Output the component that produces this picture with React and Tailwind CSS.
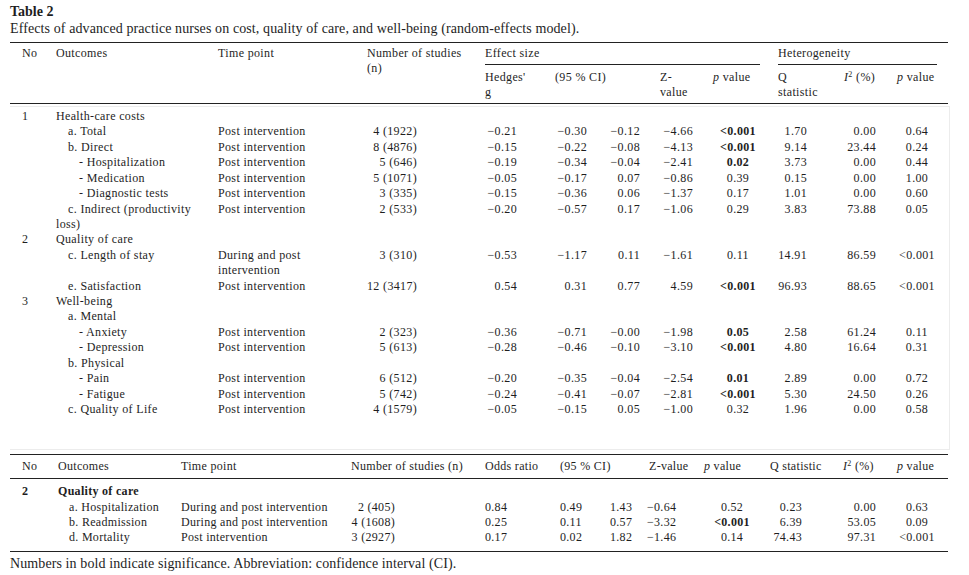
const GRID1 = 'grid grid-cols-[46px_162px_149px_118px_70px_55px_50px_53px_65px_66px_53px_51px] whitespace-nowrap';
const GRID2 = 'grid grid-cols-[48px_123px_170px_134px_75px_50px_39px_55px_66px_73px_54px_51px] whitespace-nowrap';

const PI = 'Post intervention';

const rows1 = [
    { no: '1', label: 'Health-care costs' },
    { label: 'a. Total', level: 1, time: PI, n: '4 (1922)', g: '−0.21', lo: '−0.30', hi: '−0.12', z: '−4.66', p: '<0.001', pb: true, q: '1.70', i2: '0.00', hp: '0.64' },
    { label: 'b. Direct', level: 1, time: PI, n: '8 (4876)', g: '−0.15', lo: '−0.22', hi: '−0.08', z: '−4.13', p: '<0.001', pb: true, q: '9.14', i2: '23.44', hp: '0.24' },
    { label: '- Hospitalization', level: 2, time: PI, n: '5 (646)', g: '−0.19', lo: '−0.34', hi: '−0.04', z: '−2.41', p: '0.02', pb: true, q: '3.73', i2: '0.00', hp: '0.44' },
    { label: '- Medication', level: 2, time: PI, n: '5 (1071)', g: '−0.05', lo: '−0.17', hi: '0.07', z: '−0.86', p: '0.39', q: '0.15', i2: '0.00', hp: '1.00' },
    { label: '- Diagnostic tests', level: 2, time: PI, n: '3 (335)', g: '−0.15', lo: '−0.36', hi: '0.06', z: '−1.37', p: '0.17', q: '1.01', i2: '0.00', hp: '0.60' },
    { label: ['c. Indirect (productivity', 'loss)'], time: PI, n: '2 (533)', g: '−0.20', lo: '−0.57', hi: '0.17', z: '−1.06', p: '0.29', q: '3.83', i2: '73.88', hp: '0.05' },
    { no: '2', label: 'Quality of care' },
    { label: 'c. Length of stay', level: 1, time: ['During and post', 'intervention'], n: '3 (310)', g: '−0.53', lo: '−1.17', hi: '0.11', z: '−1.61', p: '0.11', q: '14.91', i2: '86.59', hp: '<0.001' },
    { label: 'e. Satisfaction', level: 1, time: PI, n: '12 (3417)', g: '0.54', lo: '0.31', hi: '0.77', z: '4.59', p: '<0.001', pb: true, q: '96.93', i2: '88.65', hp: '<0.001' },
    { no: '3', label: 'Well-being' },
    { label: 'a. Mental', level: 1 },
    { label: '- Anxiety', level: 2, time: PI, n: '2 (323)', g: '−0.36', lo: '−0.71', hi: '−0.00', z: '−1.98', p: '0.05', pb: true, q: '2.58', i2: '61.24', hp: '0.11' },
    { label: '- Depression', level: 2, time: PI, n: '5 (613)', g: '−0.28', lo: '−0.46', hi: '−0.10', z: '−3.10', p: '<0.001', pb: true, q: '4.80', i2: '16.64', hp: '0.31' },
    { label: 'b. Physical', level: 1 },
    { label: '- Pain', level: 2, time: PI, n: '6 (512)', g: '−0.20', lo: '−0.35', hi: '−0.04', z: '−2.54', p: '0.01', pb: true, q: '2.89', i2: '0.00', hp: '0.72' },
    { label: '- Fatigue', level: 2, time: PI, n: '5 (742)', g: '−0.24', lo: '−0.41', hi: '−0.07', z: '−2.81', p: '<0.001', pb: true, q: '5.30', i2: '24.50', hp: '0.26' },
    { label: 'c. Quality of Life', level: 1, time: PI, n: '4 (1579)', g: '−0.05', lo: '−0.15', hi: '0.05', z: '−1.00', p: '0.32', q: '1.96', i2: '0.00', hp: '0.58' },
];

const rows2 = [
    { label: 'a. Hospitalization', time: 'During and post intervention', n: '2 (405)', or: '0.84', lo: '0.49', hi: '1.43', z: '−0.64', p: '0.52', q: '0.23', i2: '0.00', hp: '0.63' },
    { label: 'b. Readmission', time: 'During and post intervention', n: '4 (1608)', or: '0.25', lo: '0.11', hi: '0.57', z: '−3.32', p: '<0.001', pb: true, q: '6.39', i2: '53.05', hp: '0.09' },
    { label: 'd. Mortality', time: PI, n: '3 (2927)', or: '0.17', lo: '0.02', hi: '1.82', z: '−1.46', p: '0.14', q: '74.43', i2: '97.31', hp: '<0.001' },
];

const Lines = ({ v }) =>
    Array.isArray(v) ? (
        <>
            {v[0]}
            <br />
            {v[1]}
        </>
    ) : (
        v
    );

const PVal = () => (
    <>
        <i>p</i> value
    </>
);

const I2 = () => (
    <>
        <i>I</i>
        <sup className="text-[8px]">2</sup> (%)
    </>
);

const Row1 = ({ r }) => {
    const indent = Array.isArray(r.label)
        ? 'indent-[12px]'
        : r.level === 2
        ? 'pl-[23px]'
        : r.level === 1
        ? 'pl-[12px]'
        : '';
    return (
        <div className={`${GRID1} leading-[15.42px]`}>
            <div className="pl-[12px]">{r.no}</div>
            <div className={indent}>
                <Lines v={r.label} />
            </div>
            <div>
                <Lines v={r.time} />
            </div>
            <div className="text-right pr-[68px]">{r.n}</div>
            <div className="text-right pr-[38px]">{r.g}</div>
            <div className="text-right pr-[23px]">{r.lo}</div>
            <div className="text-right pr-[20px]">{r.hi}</div>
            <div className="text-right pr-[20px]">{r.z}</div>
            <div className={`text-center pr-[15px] ${r.pb ? 'font-bold' : ''}`}>{r.p}</div>
            <div className="text-right pr-[37px]">{r.q}</div>
            <div className="text-right pr-[21px]">{r.i2}</div>
            <div className="text-center pr-[11px]">{r.hp}</div>
        </div>
    );
};

const Row2 = ({ r }) => (
    <div className={`${GRID2} leading-[15.3px]`}>
        <div />
        <div className="pl-[11px]">{r.label}</div>
        <div>{r.time}</div>
        <div className="text-right pr-[90px]">{r.n}</div>
        <div>{r.or}</div>
        <div>{r.lo}</div>
        <div className="text-right pr-[22px]">{r.hi}</div>
        <div className="-ml-[2px]">{r.z}</div>
        <div className={`text-center pr-[10px] ${r.pb ? 'font-bold' : ''}`}>{r.p}</div>
        <div className="text-right pr-[41px]">{r.q}</div>
        <div className="text-right pr-[21px]">{r.i2}</div>
        <div className="text-center pr-[11px]">{r.hp}</div>
    </div>
);

export default function App() {
    return (
        <div className="w-[969px] h-[575px] bg-white text-[#1e1e1e] font-['Liberation_Serif',serif] overflow-hidden">
            <div className="pl-[10px] pt-[4px]">
                <div className="text-[14px] font-bold leading-[16px]">Table 2</div>
                <div className="text-[14px] leading-[17px] tracking-[0.1px]">
                    Effects of advanced practice nurses on cost, quality of care, and well-being (random-effects model).
                </div>

                {/* Table 1 */}
                <div className="mt-[5px] w-[938px] border-t border-[#222] text-[12px] tracking-[0.35px]">
                    <div className="flex pt-[3px] leading-[15px] border-b border-[#222] pb-[3px] whitespace-nowrap">
                        <div className="w-[46px] pl-[12px]">No</div>
                        <div className="w-[162px]">Outcomes</div>
                        <div className="w-[149px]">Time point</div>
                        <div className="w-[118px]">
                            Number of studies
                            <br />
                            (n)
                        </div>
                        <div className="w-[293px]">
                            <div>Effect size</div>
                            <div className="w-[275px] border-b border-[#222] mt-[3px] mb-[5px]" />
                            <div className="grid grid-cols-[70px_105px_53px_65px]">
                                <div>
                                    Hedges'
                                    <br />g
                                </div>
                                <div>(95 % CI)</div>
                                <div>
                                    Z-
                                    <br />
                                    value
                                </div>
                                <div>
                                    <PVal />
                                </div>
                            </div>
                        </div>
                        <div className="w-[170px]">
                            <div>Heterogeneity</div>
                            <div className="w-[159px] border-b border-[#222] mt-[3px] mb-[5px]" />
                            <div className="grid grid-cols-[66px_53px_51px]">
                                <div>
                                    Q
                                    <br />
                                    statistic
                                </div>
                                <div>
                                    <I2 />
                                </div>
                                <div>
                                    <PVal />
                                </div>
                            </div>
                        </div>
                    </div>
                    <div className="mt-[2px] w-[940px] border-t border-r border-b border-[#ececec] pt-[2px] pb-[32px]">
                        {rows1.map((r, i) => (
                            <Row1 key={i} r={r} />
                        ))}
                    </div>
                </div>

                {/* Table 2 */}
                <div className="mt-[4px] w-[938px] border-t border-b border-[#222] text-[12px] tracking-[0.3px]">
                    <div className={`${GRID2} leading-[15px] pt-[4px] pb-[4px] border-b border-[#222]`}>
                        <div className="pl-[12px]">No</div>
                        <div>Outcomes</div>
                        <div>Time point</div>
                        <div>Number of studies (n)</div>
                        <div>Odds ratio</div>
                        <div className="col-span-2">(95 % CI)</div>
                        <div>Z-value</div>
                        <div>
                            <PVal />
                        </div>
                        <div>Q statistic</div>
                        <div>
                            <I2 />
                        </div>
                        <div>
                            <PVal />
                        </div>
                    </div>
                    <div className="pt-[5px] pb-[5px]">
                        <div className={`${GRID2} leading-[15.3px]`}>
                            <div className="pl-[12px] font-bold">2</div>
                            <div className="font-bold">Quality of care</div>
                        </div>
                        {rows2.map((r, i) => (
                            <Row2 key={i} r={r} />
                        ))}
                    </div>
                </div>

                <div className="mt-[4px] text-[14px] leading-[16px] tracking-[0.1px]">
                    Numbers in bold indicate significance. Abbreviation: confidence interval (CI).
                </div>
            </div>
        </div>
    );
}
